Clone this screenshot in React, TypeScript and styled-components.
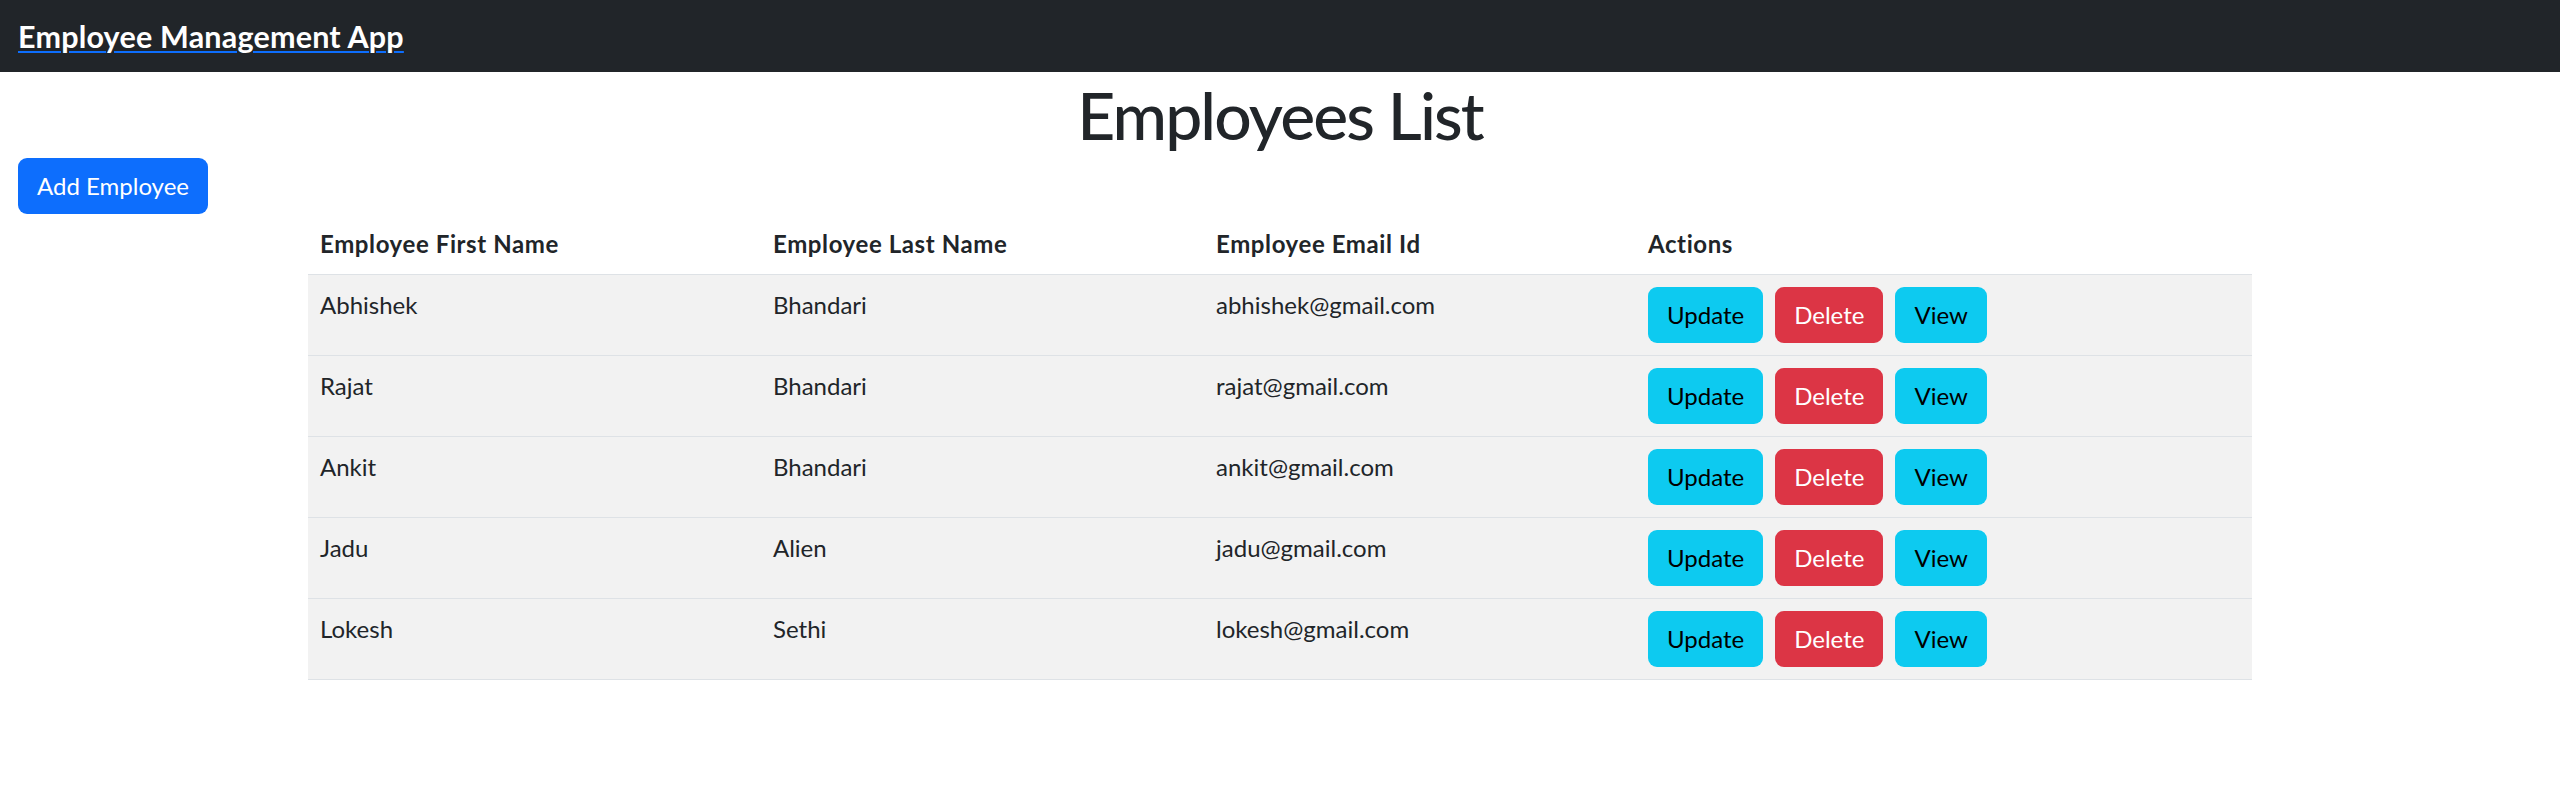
import React from 'react';
import styled, {createGlobalStyle} from 'styled-components';

const GlobalStyle = createGlobalStyle`
  body {
    margin: 0;
    font-family: Lato, "Open Sans", "Liberation Sans", sans-serif;
    font-size: 24px;
    line-height: 1.5;
    color: #212529;
    background: #fff;
  }
  * {
    box-sizing: border-box;
  }
`

const Navbar = styled.header`
  height: 72px;
  background: #212529;
  display: flex;
  align-items: center;
  padding: 0 18px;
`
const Brand = styled.a`
  color: #fff;
  font-size: 30.5px;
  font-weight: 700;
  line-height: 1.2;
  letter-spacing: 0.2px;
  text-decoration: underline;
  text-decoration-color: #0d6efd;
  text-underline-offset: 3px;
  text-decoration-thickness: 2px;
`
const Title = styled.h2`
  margin: 0;
  text-align: center;
  font-size: 66px;
  font-weight: 500;
  line-height: 86px;
  letter-spacing: -1.9px;
`
const Button = styled.button<{variant: 'primary' | 'info' | 'danger'}>`
  font-family: inherit;
  font-size: 24px;
  line-height: 1.5;
  padding: 9px 18px;
  border: 1.5px solid transparent;
  border-radius: 9px;
  cursor: pointer;
  background: ${p => p.variant === 'primary' ? '#0d6efd' : p.variant === 'danger' ? '#dc3545' : '#0dcaf0'};
  color: ${p => p.variant === 'info' ? '#000' : '#fff'};
`
const AddRow = styled.div`
  padding-left: 18px;
`
const Container = styled.div`
  max-width: 1980px;
  margin: 0 auto;
  padding: 0 18px;
`
const Table = styled.table`
  width: 100%;
  border-collapse: collapse;
  table-layout: fixed;
`
const Th = styled.th<{w: number}>`
  width: ${p => p.w}px;
  text-align: left;
  font-weight: 700;
  letter-spacing: 0.6px;
  padding: 12px;
  border-bottom: 1.5px solid #dee2e6;
`
const Row = styled.tr`
  background: #f2f2f2;
`
const Td = styled.td`
  padding: 12px;
  vertical-align: top;
  border-bottom: 1.5px solid #dee2e6;
`
const Actions = styled.div`
  display: flex;
  gap: 12px;
`

const employees = [
    {first: 'Abhishek', last: 'Bhandari', email: 'abhishek@gmail.com'},
    {first: 'Rajat', last: 'Bhandari', email: 'rajat@gmail.com'},
    {first: 'Ankit', last: 'Bhandari', email: 'ankit@gmail.com'},
    {first: 'Jadu', last: 'Alien', email: 'jadu@gmail.com'},
    {first: 'Lokesh', last: 'Sethi', email: 'lokesh@gmail.com'},
];

function App() {
    return (
        <>
            <GlobalStyle/>
            <Navbar>
                <Brand href="#">Employee Management App</Brand>
            </Navbar>
            <Title>Employees List</Title>
            <AddRow>
                <Button variant="primary">Add Employee</Button>
            </AddRow>
            <Container>
                <Table>
                    <thead>
                        <tr>
                            <Th w={453}>Employee First Name</Th>
                            <Th w={443}>Employee Last Name</Th>
                            <Th w={432}>Employee Email Id</Th>
                            <Th w={616}>Actions</Th>
                        </tr>
                    </thead>
                    <tbody>
                        {employees.map(e => (
                            <Row key={e.email}>
                                <Td>{e.first}</Td>
                                <Td>{e.last}</Td>
                                <Td>{e.email}</Td>
                                <Td>
                                    <Actions>
                                        <Button variant="info">Update</Button>
                                        <Button variant="danger">Delete</Button>
                                        <Button variant="info">View</Button>
                                    </Actions>
                                </Td>
                            </Row>
                        ))}
                    </tbody>
                </Table>
            </Container>
        </>
    );
}

export default App;
